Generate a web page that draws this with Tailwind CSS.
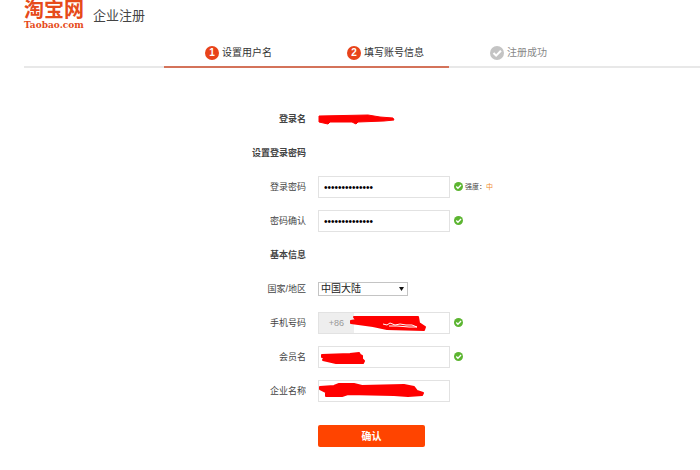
<!DOCTYPE html>
<html lang="zh-CN">
<head>
    <meta charset="UTF-8">
    <meta name="viewport" content="width=device-width, initial-scale=1.0">
    <title>淘宝网 - 企业注册</title>
    <script src="https://cdn.jsdelivr.net/npm/@tailwindcss/browser@4"></script>
</head>
<body class="bg-white text-[#444] text-[9px] font-['Liberation_Sans','Noto_Sans_CJK_SC',sans-serif]">

    <!-- Shared icons -->
    <svg class="hidden">
        <symbol id="icon-ok" viewBox="0 0 16 16">
            <circle cx="8" cy="8" r="8" fill="#5cb531"/>
            <path d="M4 8l3 3 5.500-5.500" fill="none" stroke="#fff" stroke-width="2.400"/>
        </symbol>
    </svg>

    <!-- Header -->
    <header class="flex pl-6">
        <div class="w-16 text-[#e64a19] font-bold">
            <div class="text-[20px] leading-5 whitespace-nowrap">淘宝网</div>
            <div class="text-[9px] leading-[10px] font-['DejaVu_Serif',serif]">Taobao.com</div>
        </div>
        <h1 class="pl-[5px] pt-2 text-[13px] leading-4">企业注册</h1>
    </header>

    <!-- Steps -->
    <ol class="flex ml-6 mt-4 text-[10px]">
        <li class="w-[140px] shrink-0 border-b-2 border-[#e8e8e8]"></li>
        <li class="flex w-[142px] shrink-0 items-start gap-[3px] pl-[41px] h-[22px] border-b-2 border-[#d4735a] text-[#333]">
            <span class="size-[14px] rounded-full bg-[#e8431a] text-white font-bold text-center leading-[14px]">1</span>
            <span class="leading-[14px]">设置用户名</span>
        </li>
        <li class="flex w-[143px] shrink-0 items-start gap-[3px] pl-[41px] h-[22px] border-b-2 border-[#d4735a] text-[#333]">
            <span class="size-[14px] rounded-full bg-[#e8431a] text-white font-bold text-center leading-[14px]">2</span>
            <span class="leading-[14px]">填写账号信息</span>
        </li>
        <li class="flex grow items-start gap-[3px] pl-[41px] h-[22px] border-b-2 border-[#e8e8e8] text-[#888]">
            <svg class="size-[14px]" viewBox="0 0 16 16">
                <circle cx="8" cy="8" r="8" fill="#c4c4c4"/>
                <path d="M4 8l3 3 5.500-5.500" fill="none" stroke="#fff" stroke-width="2.400"/>
            </svg>
            <span class="leading-[14px]">注册成功</span>
        </li>
    </ol>

    <!-- Form -->
    <form class="pt-[34px] pb-6">
        <div class="grid grid-cols-[306px_1fr] auto-rows-[34px] items-center gap-x-3">
            <span class="pt-0.5 text-right font-bold">登录名</span>
            <svg class="w-20 h-3" viewBox="0 0 80 12">
                <path d="M1 3L50 2 62 4 75 5 76 7 66 8 40 9 38 11 34 9 12 9 10 11 1 9z" fill="#f00" stroke="#f00" stroke-linejoin="round"/>
            </svg>

            <h2 class="pt-0.5 text-right font-bold">设置登录密码</h2>
            <span></span>

            <label for="password" class="pt-0.5 text-right">登录密码</label>
            <div class="flex items-center gap-1">
                <input id="password" type="password" value="12345678901234" class="w-[132px] h-[22px] border border-[#e2e2e2] px-[5px] text-[10px] text-black">
                <svg class="size-[9px] mb-0.5"><use href="#icon-ok"/></svg>
                <span class="-ml-0.5 text-[7px]">强度：<span class="text-[#f08c2e]">中</span></span>
            </div>

            <label for="confirm" class="pt-0.5 text-right">密码确认</label>
            <div class="flex items-center gap-1">
                <input id="confirm" type="password" value="12345678901234" class="w-[132px] h-[22px] border border-[#e2e2e2] px-[5px] text-[10px] text-black">
                <svg class="size-[9px] mb-0.5"><use href="#icon-ok"/></svg>
            </div>

            <h2 class="pt-0.5 text-right font-bold">基本信息</h2>
            <span></span>

            <label for="country" class="pt-0.5 text-right">国家/地区</label>
            <div class="relative w-[90px] h-[14px]">
                <select id="country" class="block w-full h-full appearance-none border border-[#c4c4c4] pl-[2px] text-[10px] leading-3 text-[#222]">
                    <option>中国大陆</option>
                </select>
                <svg class="absolute right-1 top-[5px] w-[5px] h-1 pointer-events-none" viewBox="0 0 5 4"><path d="M0 0h5L2.500 4z" fill="#111"/></svg>
            </div>

            <label for="phone" class="pt-0.5 text-right">手机号码</label>
            <div class="flex items-center gap-1">
                <div class="relative flex w-[132px] h-[22px] border border-[#e2e2e2]">
                    <span class="w-[35px] shrink-0 bg-[#eee] text-[#999] text-center leading-5">+86</span>
                    <input id="phone" type="tel" class="min-w-0 grow">
                    <svg class="absolute left-[30px] top-[2px] w-[78px] h-4 pointer-events-none" viewBox="0 0 78 16">
                        <path d="M5 2L69 2 70 8 76 12 75 15 38 14 24 11 2 8 2 6 7 5z" fill="#f00" stroke="#f00" stroke-width="2" stroke-linejoin="round"/>
                        <path d="M34 9l4 1 3-2 5 2 5-1 6 1 6 0 5 2-8 0-12-1-8 0" fill="none" stroke="#fff"/>
                    </svg>
                </div>
                <svg class="size-[9px] mb-0.5"><use href="#icon-ok"/></svg>
            </div>

            <label for="member" class="pt-0.5 text-right">会员名</label>
            <div class="flex items-center gap-1">
                <div class="relative flex w-[132px] h-[22px] border border-[#e2e2e2]">
                    <input id="member" type="text" class="min-w-0 grow">
                    <svg class="absolute left-px top-[5px] w-[46px] h-3 pointer-events-none" viewBox="0 0 46 12">
                        <path d="M2 3L30 2 39 1 40 3 42 4 42 7 44 9 43 11 16 11 3 8 5 6 2 5z" fill="#f00" stroke="#f00" stroke-width="2" stroke-linejoin="round"/>
                    </svg>
                </div>
                <svg class="size-[9px] mb-0.5"><use href="#icon-ok"/></svg>
            </div>

            <label for="company" class="pt-0.5 text-right">企业名称</label>
            <div class="relative flex w-[132px] h-[22px] border border-[#e2e2e2]">
                <input id="company" type="text" class="min-w-0 grow">
                <svg class="absolute -left-px top-px w-[108px] h-4 pointer-events-none" viewBox="0 0 108 16">
                    <path d="M2 5L16 4 21 2 36 2 44 4 86 3 96 5 99 9 105 11 104 13 90 14 76 13 30 12 24 14 8 14 8 10 2 7z" fill="#f00" stroke="#f00" stroke-width="2" stroke-linejoin="round"/>
                </svg>
            </div>
        </div>

        <button type="submit" class="block ml-[318px] mt-[17px] w-[107px] h-[22px] rounded-xs bg-[#ff4400] text-white text-[10px] font-bold">确认</button>
    </form>

</body>
</html>
